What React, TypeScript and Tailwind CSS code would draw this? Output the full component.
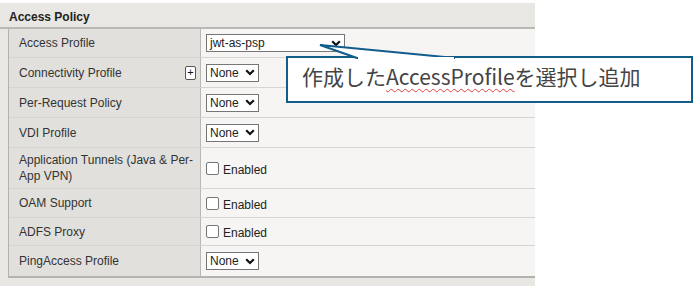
const rows: { label: string; kind: "jwt" | "none" | "check"; h: string; plus?: boolean }[] = [
  { label: "Access Profile", kind: "jwt", h: "h-[29px]" },
  { label: "Connectivity Profile", kind: "none", h: "h-[30px]", plus: true },
  { label: "Per-Request Policy", kind: "none", h: "h-[30px]" },
  { label: "VDI Profile", kind: "none", h: "h-[30px]" },
  { label: "Application Tunnels (Java & Per-App VPN)", kind: "check", h: "h-[41px]" },
  { label: "OAM Support", kind: "check", h: "h-[29px]" },
  { label: "ADFS Proxy", kind: "check", h: "h-[28px]" },
  { label: "PingAccess Profile", kind: "none", h: "h-[30px]" },
];

function Chevron() {
  return (
    <svg width="10" height="7" viewBox="0 0 10 7" className="shrink-0">
      <path d="M1.2 1.2 L5 5 L8.8 1.2" fill="none" stroke="#111" strokeWidth="2.2" />
    </svg>
  );
}

function Select({ text, wide }: { text: string; wide?: boolean }) {
  return (
    <div
      className={`flex items-center justify-between h-[18px] bg-white border border-[#767676] pl-[3px] pr-[3px] text-[12px] text-[#222] ${
        wide ? "w-[139px]" : "w-[53px]"
      }`}
    >
      <span>{text}</span>
      <Chevron />
    </div>
  );
}

function Check() {
  return (
    <div className="flex items-center gap-[4px] text-[12px] text-[#222]">
      <div className="w-[13px] h-[13px] bg-white border border-[#767676] rounded-[2px]" />
      <span className="mt-[3px]">Enabled</span>
    </div>
  );
}

export default function App() {
  return (
    <div className="relative w-[696px] h-[292px] bg-white font-['Liberation_Sans',Arial,sans-serif] overflow-hidden">
      <div className="w-[535px] mt-[3px] bg-[#e8e7e3] pb-[8px]">
        <div className="h-[26px] flex items-center pl-[9px] pt-[3px] text-[12px] font-bold text-[#222] border-b-2 border-[#b9b8b4]">
          Access Policy
        </div>
        <div className="ml-[8px] border-l border-b-2 border-[#b3b2ae]">
          {rows.map((r, i) => (
            <div
              key={i}
              className={`grid grid-cols-[192px_1fr] ${r.h} ${i < rows.length - 1 ? "border-b" : ""} border-[#d6d5d1]`}
            >
              <div className="bg-[#e1e0dc] border-r border-[#b8b7b3] flex items-center justify-between pl-[10px] pr-[4px] text-[12px] text-[#333] leading-[16px]">
                <span>{r.label}</span>
                {r.plus && (
                  <div className="w-[11px] h-[14px] bg-white border border-[#555] rounded-[2px] flex items-center justify-center text-[11px] leading-none text-[#111]">
                    +
                  </div>
                )}
              </div>
              <div className="bg-[#f6f5f3] flex items-center pl-[5px]">
                {r.kind === "jwt" && <Select text="jwt-as-psp" wide />}
                {r.kind === "none" && <Select text="None" />}
                {r.kind === "check" && <Check />}
              </div>
            </div>
          ))}
        </div>
      </div>

      {/* callout */}
      <div className="absolute left-[286px] top-[56px] w-[407px] h-[47px] bg-white border-2 border-[#125d8c] flex items-center pl-[14px] pb-[5px] font-['Noto_Sans_CJK_JP',sans-serif] text-[21px] text-[#444]">
        <span>
          作成した
          <span className="underline decoration-wavy decoration-[#e04040] decoration-1 underline-offset-[3px]">AccessProfile</span>
          を選択し追加
        </span>
      </div>
      <svg className="absolute left-0 top-0" width="696" height="292" viewBox="0 0 696 292">
        <polygon points="357,58 320,45 455,58" fill="white" stroke="#125d8c" strokeWidth="2" strokeLinejoin="miter" />
        <line x1="358" y1="58" x2="454" y2="58" stroke="white" strokeWidth="2" />
      </svg>
    </div>
  );
}
